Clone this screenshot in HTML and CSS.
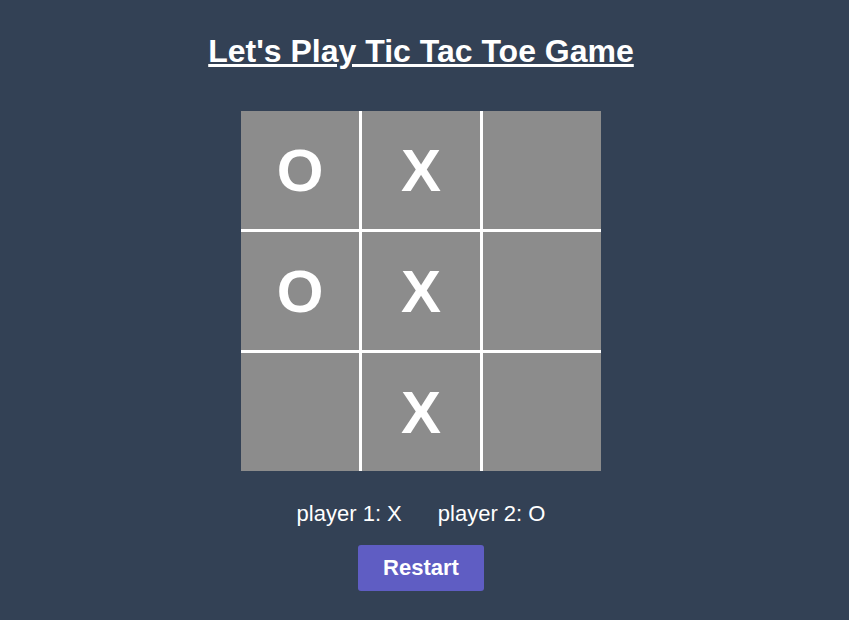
FILE: index.html
```html
<!DOCTYPE html>
<html lang="en">
<head>
<meta charset="utf-8">
<title>Tic Tac Toe</title>
<link rel="stylesheet" href="styles.css">
</head>
<body>
<main class="app">
  <h1 class="title">Let's Play Tic Tac Toe Game</h1>
  <div class="board">
    <div class="cell">O</div>
    <div class="cell">X</div>
    <div class="cell"></div>
    <div class="cell">O</div>
    <div class="cell">X</div>
    <div class="cell"></div>
    <div class="cell"></div>
    <div class="cell">X</div>
    <div class="cell"></div>
  </div>
  <div class="players">
    <span>player 1: X</span>
    <span>player 2: O</span>
  </div>
  <button class="restart">Restart</button>
</main>
</body>
</html>
```
FILE: styles.css
```css
html, body {
  margin: 0;
  padding: 0;
  background: #334155;
  height: 100%;
}
body {
  font-family: "Liberation Sans", Arial, sans-serif;
  color: #ffffff;
}
.app {
  width: 842px;
  display: flex;
  flex-direction: column;
  align-items: center;
}
.title {
  margin: 33px 0 0;
  font-size: 32px;
  line-height: 37px;
  font-weight: bold;
  text-decoration: underline;
}
.board {
  margin-top: 41px;
  display: grid;
  grid-template-columns: repeat(3, 118px);
  grid-template-rows: repeat(3, 118px);
  gap: 3px;
  background: #ffffff;
}
.cell {
  background: #8c8c8c;
  display: flex;
  align-items: center;
  justify-content: center;
  font-size: 60px;
  font-weight: bold;
  color: #ffffff;
}
.players {
  margin-top: 30px;
  display: flex;
  gap: 36px;
  font-size: 22px;
  line-height: 25px;
}
.restart {
  margin-top: 19px;
  width: 126px;
  height: 46px;
  border: none;
  border-radius: 3px;
  background: #5f5dc3;
  color: #ffffff;
  font-family: "Liberation Sans", Arial, sans-serif;
  font-size: 22px;
  font-weight: bold;
  padding: 0;
}
```
